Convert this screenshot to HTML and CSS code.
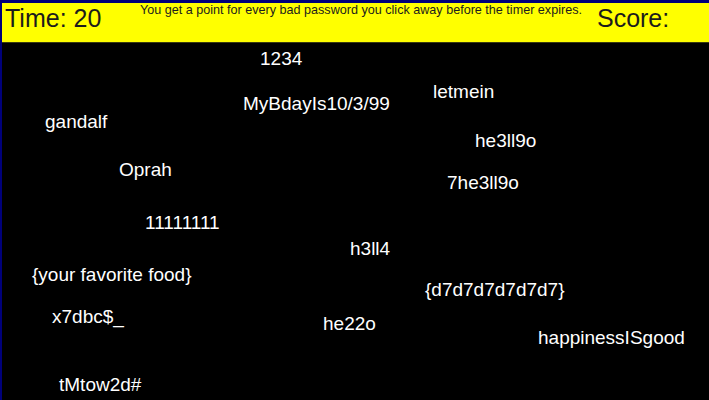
FILE: index.html
```html
<!DOCTYPE html>
<html>
<head>
<meta charset="utf-8">
<title>Password Game</title>
<link rel="stylesheet" href="styles.css">
</head>
<body>
<div class="page">
  <header class="bar">
    <div class="time">Time: 20</div>
    <div class="msg">You get a point for every bad password you click away before the timer expires.</div>
    <div class="score">Score:</div>
  </header>
  <main class="field">
    <span class="pw" style="left:258px;top:5px">1234</span>
    <span class="pw" style="left:241px;top:50px">MyBdayIs10/3/99</span>
    <span class="pw" style="left:431px;top:38px">letmein</span>
    <span class="pw" style="left:43px;top:68px">gandalf</span>
    <span class="pw" style="left:473px;top:87px">he3ll9o</span>
    <span class="pw" style="left:117px;top:116px">Oprah</span>
    <span class="pw" style="left:445px;top:129px">7he3ll9o</span>
    <span class="pw" style="left:143px;top:169px">11111111</span>
    <span class="pw" style="left:348px;top:195px">h3ll4</span>
    <span class="pw" style="left:30px;top:221px">{your favorite food}</span>
    <span class="pw" style="left:423px;top:236px">{d7d7d7d7d7d7}</span>
    <span class="pw" style="left:50px;top:263px">x7dbc$_</span>
    <span class="pw" style="left:321px;top:270px">he22o</span>
    <span class="pw" style="left:536px;top:284px">happinessISgood</span>
    <span class="pw" style="left:57px;top:331px">tMtow2d#</span>
  </main>
</div>
</body>
</html>
```

FILE: styles.css
```css
html, body {
  margin: 0;
  padding: 0;
  height: 100%;
}
body {
  background: #00007a;
  font-family: "Liberation Sans", Arial, sans-serif;
  overflow: hidden;
}
.page {
  margin: 3px 0 0 2px;
  height: 397px;
  background: #000000;
  display: flex;
  flex-direction: column;
}
.bar {
  background: #ffff00;
  height: 39px;
  border-bottom: 1px solid #3a3a10;
  display: flex;
  align-items: flex-start;
  color: #1c1c1c;
}
.time {
  width: 135px;
  padding-left: 3px;
  margin-top: 1px;
  font-size: 25px;
}
.msg {
  font-size: 12.6px;
  white-space: nowrap;
}
.score {
  margin-left: 15px;
  margin-top: 1px;
  font-size: 25px;
}
.field {
  position: relative;
  flex: 1;
}
.pw {
  position: absolute;
  color: #ffffff;
  font-size: 19px;
  white-space: nowrap;
  cursor: pointer;
}
```
